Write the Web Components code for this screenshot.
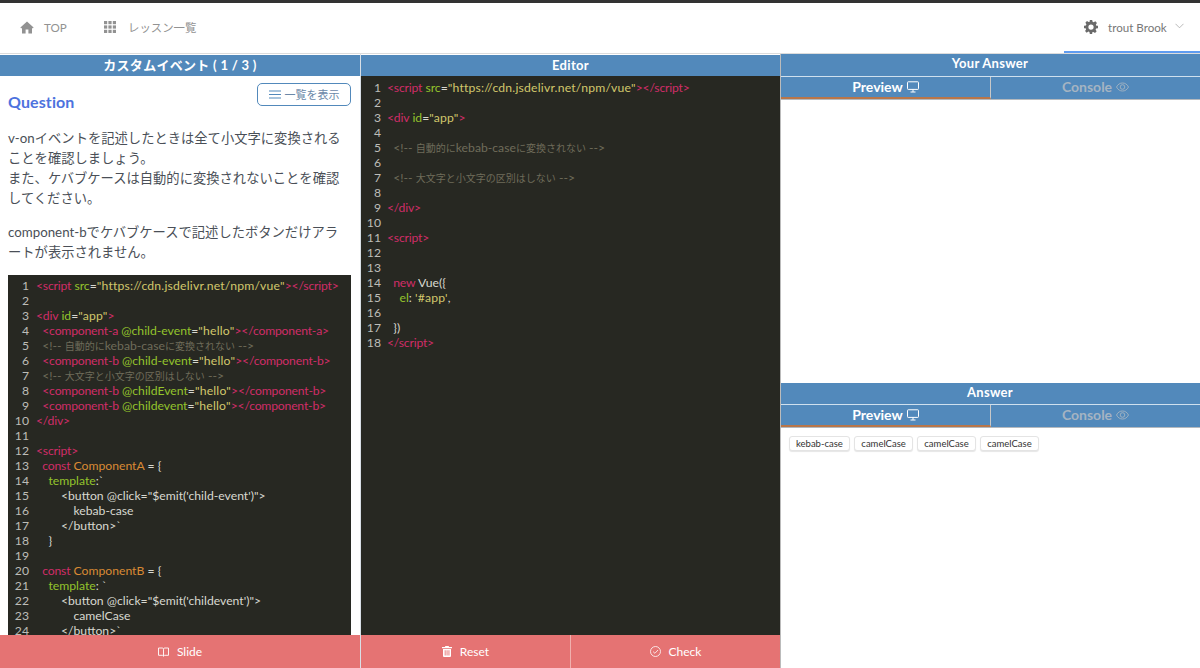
<!DOCTYPE html>
<html lang="ja"><head><meta charset="utf-8"><title>Lesson</title>
<style>
html,body{margin:0;height:668px;overflow:hidden;background:#fff;font-family:Lato,"Noto Sans CJK JP",sans-serif}
x-app{height:668px}
</style></head><body>
<x-app>
  <x-nav slot="nav"></x-nav>
  <x-column slot="left" heading="カスタムイベント ( 1 / 3 )">
    <x-question></x-question>
    <x-code src="left"></x-code>
    <x-footer slot="footer"><x-action icon="book">Slide</x-action></x-footer>
  </x-column>
  <x-column slot="mid" heading="Editor">
    <x-code src="editor" full></x-code>
    <x-footer slot="footer"><x-action icon="trash">Reset</x-action><x-action icon="check">Check</x-action></x-footer>
  </x-column>
  <x-answers slot="right"></x-answers>
</x-app>
<script>
const ICONS={
 home:'<svg width="14" height="13" viewBox="0 0 14 13"><path fill="currentColor" d="M7 .6 .4 6.600l.8.9L2 6.800V12.600h3.600V8.600h2.800v4H12V6.800l.8.7.8-.9z"/></svg>',
 grid:'<svg width="12" height="12" viewBox="0 0 12 12"><g fill="currentColor"><rect width="3.200" height="3.200"/><rect x="4.400" width="3.200" height="3.200"/><rect x="8.800" width="3.200" height="3.200"/><rect y="4.400" width="3.200" height="3.200"/><rect x="4.400" y="4.400" width="3.200" height="3.200"/><rect x="8.800" y="4.400" width="3.200" height="3.200"/><rect y="8.800" width="3.200" height="3.200"/><rect x="4.400" y="8.800" width="3.200" height="3.200"/><rect x="8.800" y="8.800" width="3.200" height="3.200"/></g></svg>',
 gear:'<svg width="14" height="14" viewBox="0 0 24 24"><path fill="currentColor" fill-rule="evenodd" d="M10 0h4l.7 3.200 1.900.8 2.800-1.800 2.800 2.800-1.800 2.800.8 1.900L24 10v4l-3.300.7-.8 1.900 1.800 2.800-2.800 2.800-2.800-1.800-1.900.8L14 24h-4l-.7-3.300-1.900-.8-2.800 1.800-2.800-2.800 1.800-2.800-.8-1.900L0 14v-4l3.300-.7.8-1.900L2.300 4.600l2.800-2.800 2.800 1.800 1.900-.8zM12 7.500a4.500 4.500 0 1 0 0 9 4.500 4.500 0 0 0 0-9z"/></svg>',
 chev:'<svg width="9" height="6" viewBox="0 0 9 6"><path fill="none" stroke="currentColor" stroke-width=".8" d="M.5.8 4.500 4.800 8.500.8"/></svg>',
 bars:'<svg width="12" height="9" viewBox="0 0 12 9"><path stroke="currentColor" stroke-width="1.200" d="M0 1h12M0 4.500h12M0 8h12"/></svg>',
 monitor:'<svg width="12" height="12" viewBox="0 0 12 12"><path fill="none" stroke="currentColor" stroke-width="1" d="M1.200.8h9.600a.7.7 0 0 1 .7.7v6.200a.7.7 0 0 1-.7.7H1.200a.7.7 0 0 1-.7-.7V1.500a.7.7 0 0 1 .7-.7zM6 8.400v2.500M3.500 11h5"/></svg>',
 eye:'<svg width="13" height="10" viewBox="0 0 13 10"><g fill="none" stroke="currentColor" stroke-width=".9"><path d="M.5 5C2 2.200 4 1 6.500 1s4.500 1.200 6 4c-1.500 2.800-3.500 4-6 4S2 7.800.5 5z"/><circle cx="6.500" cy="5" r="2.300"/></g></svg>',
 book:'<svg width="11" height="10" viewBox="0 0 11 10"><path fill="none" stroke="currentColor" stroke-width=".9" d="M.5 1h3.500c.9 0 1.500.5 1.500 1.200v7c0-.5-.6-.9-1.500-.9H.5zM10.500 1H7c-.9 0-1.500.5-1.500 1.200M10.500 1v7.300H7c-.9 0-1.500.4-1.500.9"/></svg>',
 trash:'<svg width="10" height="11" viewBox="0 0 10 11"><path fill="currentColor" d="M3.400 0h3.200l.5 1H10v1.300H0V1h2.900zM1 3h8v7a1 1 0 0 1-1 1H2a1 1 0 0 1-1-1zm1.700 1.300v5.300h.9V4.300zm1.900 0v5.300h.9V4.300zm1.900 0v5.300h.9V4.300z"/></svg>',
 check:'<svg width="11" height="11" viewBox="0 0 11 11"><g fill="none" stroke="currentColor" stroke-width=".8"><circle cx="5.500" cy="5.500" r="5"/><path d="M3.100 5.600 4.900 7.300 8 4"/></g></svg>'
};
const CODE={
left:[
'{r|<script} {g|src}{w|=}{y|"https://cdn.jsdelivr.net/npm/vue"}{r|><\/script>}','',
'{r|<div} {g|id}{w|=}{y|"app"}{r|>}',
'  {r|<component-a} {g|@child-event}{w|=}{y|"hello"}{r|></component-a>}',
'  {c|<\!-- 自動的にkebab-caseに変換されない -->}',
'  {r|<component-b} {g|@child-event}{w|=}{y|"hello"}{r|></component-b>}',
'  {c|<\!-- 大文字と小文字の区別はしない -->}',
'  {r|<component-b} {g|@childEvent}{w|=}{y|"hello"}{r|></component-b>}',
'  {r|<component-b} {g|@childevent}{w|=}{y|"hello"}{r|></component-b>}',
'{r|</div>}','',
'{r|<script>}',
'  {r|const} {o|ComponentA} {w|= {}',
'    {g|template}{w|:`}',
'        {w|<button @click="$emit(\'child-event\')">}',
'            {w|kebab-case}',
'        {w|</button>`}',
'    {w|}}','',
'  {r|const} {o|ComponentB} {w|= {}',
'    {g|template}{w|: `}',
'        {w|<button @click="$emit(\'childevent\')">}',
'            {w|camelCase}',
'        {w|</button>`}'],
editor:[
'{r|<script} {g|src}{w|=}{y|"https://cdn.jsdelivr.net/npm/vue"}{r|><\/script>}','',
'{r|<div} {g|id}{w|=}{y|"app"}{r|>}','',
'  {c|<\!-- 自動的にkebab-caseに変換されない -->}','',
'  {c|<\!-- 大文字と小文字の区別はしない -->}','',
'{r|</div>}','','{r|<script>}','','',
'  {r|new} {w|Vue({}',
'    {g|el}{w|:} {y|\'#app\'}{w|,}','',
'  {w|}}{w|)}',
'{r|<\/script>}']
};
function def(name,html,init){
  const t=document.createElement('template');t.innerHTML=html;
  customElements.define(name,class extends HTMLElement{
    constructor(){super();this.attachShadow({mode:'open'}).appendChild(t.content.cloneNode(true))}
    connectedCallback(){if(init)init(this,this.shadowRoot)}
  });
}
customElements.define('x-icon',class extends HTMLElement{
  static get observedAttributes(){return ['name']}
  constructor(){super();this.attachShadow({mode:'open'}).innerHTML='<style>:host{display:inline-flex;align-items:center;line-height:0}</style><span id="i"></span>'}
  attributeChangedCallback(){this.shadowRoot.getElementById('i').innerHTML=ICONS[this.getAttribute('name')]||''}
});
def('x-app',`<style>
:host{display:grid;grid-template-rows:54px 614px;grid-template-columns:360px 420px 420px;color:#4a4f57}
.n{grid-column:1/4;grid-row:1}
</style><div class="n"><slot name="nav"></slot></div><slot name="left"></slot><slot name="mid"></slot><slot name="right"></slot>`);
def('x-nav',`<style>
:host{display:flex;height:54px;box-sizing:border-box;border-top:3px solid #333;border-bottom:1px solid #dcdcdc;font-size:11.600px;color:#929292;align-items:stretch}
.i{display:flex;align-items:center;padding-bottom:2px;box-sizing:border-box}
.home{margin-left:20px;width:84px;gap:10px}
.list{gap:12px}
.list span{font-size:11.400px}
.grow{flex:1}
.user{width:136px;padding-left:20px;gap:10px;border-bottom:2px solid #5f9cf0;color:#777;padding-bottom:0}
.user x-icon:first-child{color:#6a6a6a}
.user x-icon:last-child{color:#a8a8a8;margin:-2px 0 0 -2px}
</style>
<div class="i home"><x-icon name="home"></x-icon><span>TOP</span></div>
<div class="i list"><x-icon name="grid"></x-icon><span>レッスン一覧</span></div>
<div class="grow"></div>
<div class="i user"><x-icon name="gear"></x-icon><span>trout Brook</span><x-icon name="chev"></x-icon></div>`);
def('x-bar',`<style>
:host{display:block;height:20px;background:#5289bb;color:#fff;font:bold 13px/21px Lato,"Noto Sans CJK JP",sans-serif;text-align:center;letter-spacing:.3px;flex:none}
</style><slot></slot>`);
def('x-column',`<style>
:host{display:flex;flex-direction:column;height:614px;overflow:hidden;box-sizing:border-box}
:host([slot=mid]){border-left:1px solid #d8dfe6}
x-bar{margin-top:1px;height:21px}
.body{flex:1;min-height:0;overflow:hidden;background:#fff}
::slotted(x-footer){flex:none}
</style><x-bar id="b"></x-bar><div class="body"><slot></slot></div><slot name="footer"></slot>`,(h,s)=>{s.getElementById('b').textContent=h.getAttribute('heading')});
def('x-question',`<style>
:host{display:block;padding:7px 8px 0;color:#4a4f57}
.top{display:flex;justify-content:space-between;height:37px}
h2{margin:9px 0 0;font:bold 16px/20px Lato,sans-serif;color:#4d72de;letter-spacing:.1px}
button{all:unset;box-sizing:border-box;width:94px;height:23px;margin-right:1px;border:1px solid #5289bb;border-radius:5px;color:#6b88a8;font:11px/21px Lato,"Noto Sans CJK JP",sans-serif;display:flex;align-items:center;justify-content:center;gap:4px;background:#fff}
button x-icon{color:#5289bb}
p{margin:0 0 14px;font-size:13.300px;line-height:20px;white-space:nowrap}
p:last-child{margin-bottom:13px}
.sp{height:8px}
</style>
<div class="top"><h2>Question</h2><button><x-icon name="bars"></x-icon>一覧を表示</button></div>
<div class="sp"></div>
<p>v-onイベントを記述したときは全て小文字に変換される<br>ことを確認しましょう。<br>また、ケバブケースは自動的に変換されないことを確認<br>してください。</p>
<p>component-bでケバブケースで記述したボタンだけアラ<br>ートが表示されません。</p>`);
def('x-code',`<style>
:host{display:block;background:#272822;color:#d8d8d0;font:12.200px/15px Lato,"Noto Sans CJK JP",sans-serif;margin:0 9px 0 8px;padding:3px 0;overflow:hidden;height:362px;box-sizing:border-box}
:host([full]){margin:0;height:560px;padding-top:4px}
.l{display:flex;height:15px;white-space:pre}
.n{width:21px;text-align:right;flex:none;color:#bdbdb8;margin-right:7px}
:host([full]) .n{width:20px;margin-right:6px}
.j{font-size:10px}
.r{color:#d02d68;letter-spacing:-.2px}.g{color:#94c32c}.y{color:#d2c76c;letter-spacing:.2px}.c{color:#6f6c5a}.o{color:#d98a34}.w{color:#d8d8d0}
</style><div id="c"></div>`,(h,s)=>{
  const c=s.getElementById('c');
  if(c.firstChild)return;
  CODE[h.getAttribute('src')].forEach((ln,i)=>{
    const d=document.createElement('div');d.className='l';
    const n=document.createElement('span');n.className='n';n.textContent=i+1;d.appendChild(n);
    const b=document.createElement('span');
    const re=/\{([rgycow])\|((?:[^}]|\}(?=\}))*)\}|([^{]+)/g;let m;
    while((m=re.exec(ln))){
      const sp=document.createElement('span');
      if(m[1]){
        sp.className=m[1];
        if(m[1]==='c'){
          m[2].split(/([\u3040-\u30ff\u4e00-\u9fff]+)/).forEach((part,k)=>{
            const run=document.createElement('span');run.textContent=part;
            if(k%2)run.className='j';
            sp.appendChild(run);
          });
        } else sp.textContent=m[2];
      } else sp.textContent=m[3];
      b.appendChild(sp);
    }
    d.appendChild(b);c.appendChild(d);
  });
});
def('x-footer',`<style>
:host{display:flex;height:33px;background:#e57373}
::slotted(x-action){flex:1}
::slotted(x-action:nth-child(2)){border-left:1px solid #f0b0ae}
</style><slot></slot>`);
def('x-action',`<style>
:host{display:flex;align-items:center;justify-content:center;gap:8px;color:#fff;font-size:12px;box-sizing:border-box;height:33px}
</style><x-icon id="ic"></x-icon><span><slot></slot></span>`,(h,s)=>{s.getElementById('ic').setAttribute('name',h.getAttribute('icon'))});
def('x-tabs',`<style>
:host{display:flex;height:24px;background:#5289bb;border-top:1px solid #cfe0ee;border-bottom:1px solid #b4b9be;box-sizing:border-box;flex:none}
div{flex:1;display:flex;align-items:center;justify-content:center;gap:4px;font:bold 14px/1 Lato,sans-serif;box-sizing:border-box}
.a{color:#fff;border-bottom:2px solid #b8764a;border-right:1px solid #c8c8c8}
.b{color:#a5b4c2;padding-bottom:2px}
</style><div class="a">Preview <x-icon name="monitor"></x-icon></div><div class="b">Console <x-icon name="eye"></x-icon></div>`);
def('x-chip',`<style>
:host{display:inline-block;box-sizing:border-box;height:15px;padding:0 6px;border:1px solid #e4e4e4;border-radius:3px;background:#fff;box-shadow:0 1px 1px rgba(0,0,0,.1);font:9.500px/13px Lato,sans-serif;color:#333}
</style><slot></slot>`);
def('x-answers',`<style>
:host{display:flex;flex-direction:column;height:614px;border-left:1px solid #bbb;box-sizing:border-box;overflow:hidden}
x-bar{height:21px;margin-left:-1px;line-height:19px}
x-bar.first{height:22px;line-height:19px}
.pane{background:#fff}
.p1{height:283px}
.p2{flex:1;padding:8px 8px;display:flex;gap:4.500px;align-items:flex-start}
</style>
<x-bar class="first">Your Answer</x-bar><x-tabs></x-tabs>
<div class="pane p1"></div>
<x-bar>Answer</x-bar><x-tabs></x-tabs>
<div class="pane p2"><x-chip>kebab-case</x-chip><x-chip>camelCase</x-chip><x-chip>camelCase</x-chip><x-chip>camelCase</x-chip></div>`);
</script>
</body></html>
